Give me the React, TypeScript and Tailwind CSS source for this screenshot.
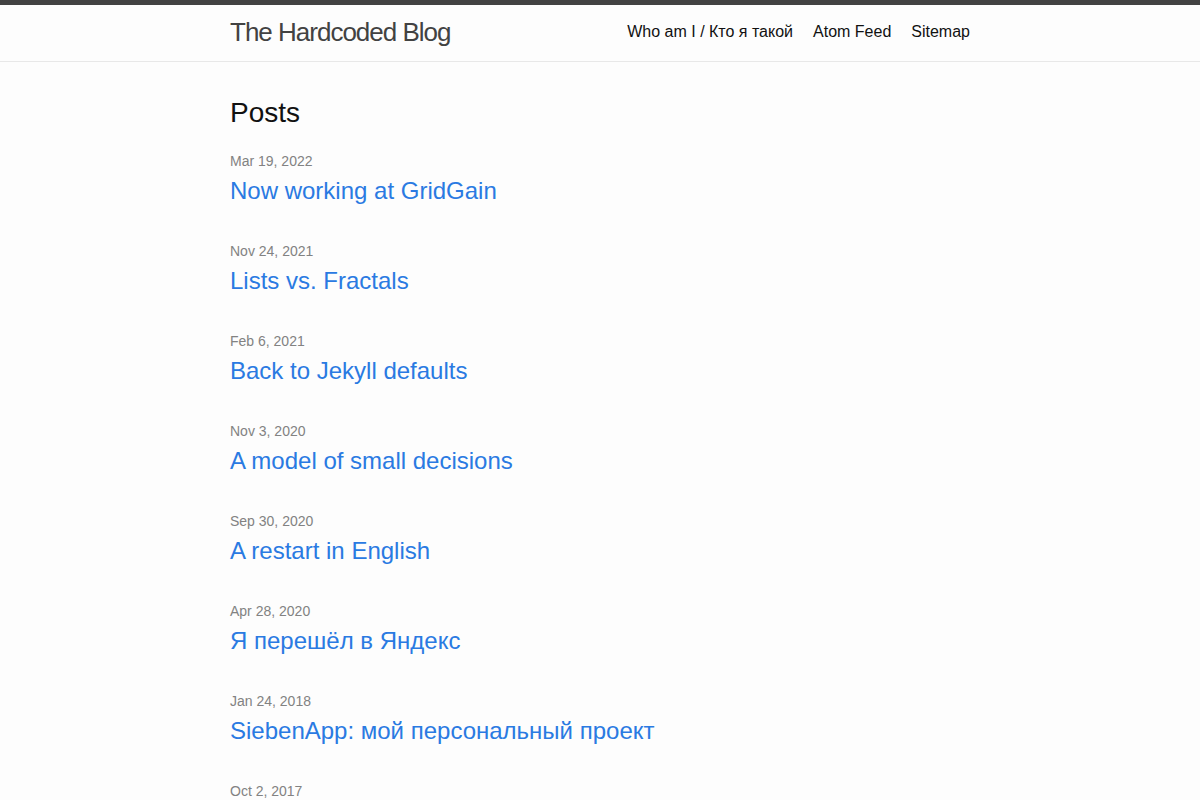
const posts = [
  { date: "Mar 19, 2022", title: "Now working at GridGain" },
  { date: "Nov 24, 2021", title: "Lists vs. Fractals" },
  { date: "Feb 6, 2021", title: "Back to Jekyll defaults" },
  { date: "Nov 3, 2020", title: "A model of small decisions" },
  { date: "Sep 30, 2020", title: "A restart in English" },
  { date: "Apr 28, 2020", title: "Я перешёл в Яндекс" },
  { date: "Jan 24, 2018", title: "SiebenApp: мой персональный проект" },
  { date: "Oct 2, 2017", title: "Цели в виде графа" },
];

const navLinks = ["Who am I / Кто я такой", "Atom Feed", "Sitemap"];

export default function App() {
  return (
    <div className="min-h-screen bg-[#fdfdfd] text-[#111] font-['Liberation_Sans',Arial,sans-serif] text-[16px] leading-[1.5]">
      <header className="h-[62px] border-t-[5px] border-t-[#424242] border-b border-b-[#e8e8e8]">
        <div className="max-w-[800px] mx-auto px-[30px] flex items-start justify-between h-[56px]">
          <a href="#" className="text-[26px] leading-[54px] tracking-[-1px] font-light text-[#424242]">
            The Hardcoded Blog
          </a>
          <nav className="flex gap-5 leading-[54px]">
            {navLinks.map((l) => (
              <a key={l} href="#" className="text-[#111]">
                {l}
              </a>
            ))}
          </nav>
        </div>
      </header>

      <main className="max-w-[800px] mx-auto px-[30px] pt-[30px] pb-[30px]">
        <h2 className="text-[28px] leading-[42px] mb-[17px]">Posts</h2>
        <ul>
          {posts.map((p) => (
            <li key={p.date} className="mb-[31px]">
              <span className="block text-[14px] leading-[21px] text-[#828282]">{p.date}</span>
              <h3>
                <a href="#" className="block text-[24px] leading-[38px] text-[#2a7ae2]">
                  {p.title}
                </a>
              </h3>
            </li>
          ))}
        </ul>
      </main>
    </div>
  );
}
